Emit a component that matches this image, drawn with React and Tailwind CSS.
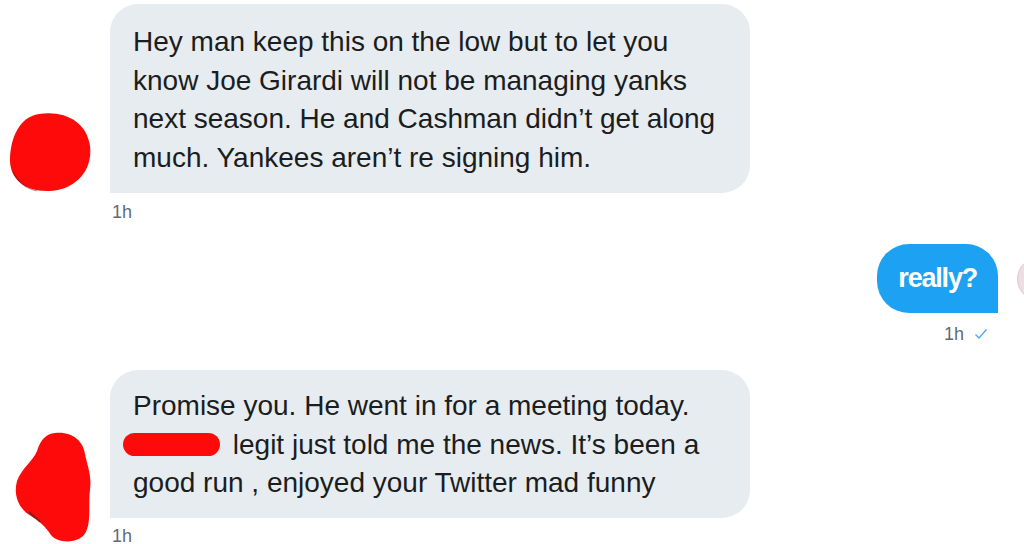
import React from "react";

function Blob1() {
  return (
    <svg width="86" height="82" viewBox="0 0 86 82" className="block">
      <path
        d="M32 3 C56 -1 80 10 83 35 C86 60 68 79 42 80 C18 81 2 68 3 47 C4 27 12 6 32 3 Z"
        fill="#ff0a0a"
      />
      <path d="M6 60 C10 70 18 77 30 80" stroke="#7a1a1a" strokeWidth="1.2" fill="none" opacity="0.5" />
    </svg>
  );
}

function Blob2() {
  return (
    <svg width="82" height="114" viewBox="0 0 82 114" className="block">
      <path
        d="M44 3 C60 1 72 10 74 24 C76 35 81 45 79 60 C77 75 81 95 73 105 C65 114 46 113 40 105 C34 96 28 91 20 86 C8 79 2 66 6 51 C10 39 22 31 26 21 C30 9 35 4 44 3 Z"
        fill="#ff0a0a"
      />
      <path d="M18 82 C22 86 26 88 29 92" stroke="#3a2a2a" strokeWidth="2" fill="none" opacity="0.6" />
    </svg>
  );
}

export default function App() {
  return (
    <div className="w-[1024px] h-[544px] overflow-hidden bg-white font-['Liberation_Sans',Arial,sans-serif] pt-[4px]">
      {/* Message 1 */}
      <div className="flex items-end">
        <div className="w-[110px] shrink-0 pl-[7px] pb-[0px]">
          <Blob1 />
        </div>
        <div className="w-[640px] bg-[#e6ecf0] rounded-[28px] rounded-bl-none pl-[23px] pr-[16px] pt-[19px] pb-[16px] text-[28px] leading-[38.5px] text-[#1b1d20] whitespace-nowrap">
          Hey man keep this on the low but to let you
          <br />
          know Joe Girardi will not be managing yanks
          <br />
          next season. He and Cashman didn’t get along
          <br />
          much. Yankees aren’t re signing him.
        </div>
      </div>
      <div className="pl-[112px] mt-[9px] h-[20px] text-[18px] leading-[20px] text-[#5f6b76]">1h</div>

      {/* Message 2 (sent) */}
      <div className="flex items-center justify-end mt-[22px]">
        <div className="h-[69px] flex items-center px-[21px] bg-[#1da1f2] rounded-[32px] rounded-br-none text-white font-bold text-[27px] tracking-[-1.2px]">
          really?
        </div>
        <div className="w-[44px] h-[44px] shrink-0 rounded-full bg-[#ecdfe2] border border-[#dccacd] ml-[19px] mr-[-37px]" />
      </div>
      <div className="flex items-center justify-end pr-[36px] mt-[11px] h-[20px] text-[18px] leading-[20px] text-[#5f6b76]">
        <span>1h</span>
        <svg width="14" height="12" viewBox="0 0 14 12" className="ml-[10px]">
          <path d="M1.5 6.5 L5 10 L12.5 1.5" stroke="#4aa8e8" strokeWidth="1.3" fill="none" />
        </svg>
      </div>

      {/* Message 3 */}
      <div className="flex items-end mt-[26px]">
        <div className="w-[110px] shrink-0 pl-[11px] mb-[-26px]">
          <Blob2 />
        </div>
        <div className="w-[640px] bg-[#e6ecf0] rounded-[28px] rounded-bl-none pl-[23px] pr-[16px] pt-[17px] pb-[15px] text-[28px] leading-[38.5px] text-[#1b1d20] whitespace-nowrap">
          Promise you. He went in for a meeting today.
          <br />
          <span className="inline-block align-middle w-[97px] h-[23px] bg-[#ff0a0a] rounded-full ml-[-10px] mr-[5px] relative top-[-2px]" />{" "}
          legit just told me the news. It’s been a
          <br />
          good run , enjoyed your Twitter mad funny
        </div>
      </div>
      <div className="pl-[112px] mt-[8px] h-[20px] text-[18px] leading-[20px] text-[#5f6b76]">1h</div>
    </div>
  );
}
